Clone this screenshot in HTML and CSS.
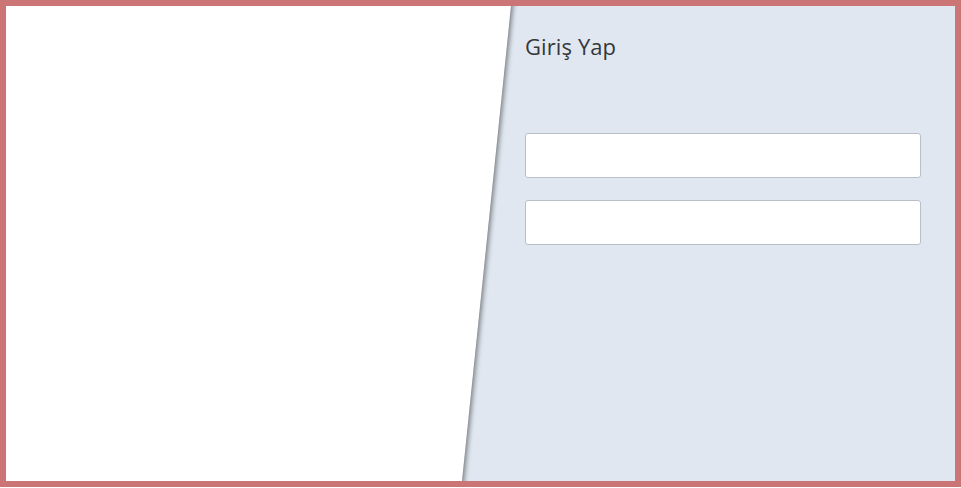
FILE: index.html
```html
<!DOCTYPE html>
<html lang="tr">
<head>
<meta charset="utf-8">
<title>Giriş Yap</title>
<link rel="stylesheet" href="styles.css">
</head>
<body>
<div class="frame">
  <div class="left"></div>
  <div class="panel">
    <h1 class="title">Giriş Yap</h1>
    <form class="form">
      <input class="field" type="text" aria-label="Kullanıcı adı">
      <input class="field" type="password" aria-label="Şifre">
    </form>
  </div>
</div>
</body>
</html>
```

FILE: styles.css
```css
* { box-sizing: border-box; }
html, body { margin: 0; padding: 0; background: #ffffff; }
body { font-family: "Open Sans", "Liberation Sans", sans-serif; }

.frame {
  width: 961px;
  height: 487px;
  border: 6px solid #cb7577;
  display: flex;
  background: #ffffff;
  overflow: hidden;
}

.left {
  flex: 0 0 456px;
  background: #ffffff;
}

.panel {
  flex: 1;
  background:
    linear-gradient(95.89deg,
      #8c9198 48.7px,
      #a9aeb5 50.5px,
      #c8ced6 52.5px,
      #dbe1ea 54.5px,
      rgba(225, 231, 240, 0) 56.5px),
    #e1e7f0;
  clip-path: polygon(49px 0, 100% 0, 100% 100%, 0 100%);
  padding: 25px 35px 0 63px;
}

.title {
  margin: 0;
  font-weight: 400;
  font-size: 22px;
  line-height: 30px;
  letter-spacing: 0.1px;
  color: #34373c;
}

.form {
  margin-top: 72px;
  display: flex;
  flex-direction: column;
  gap: 22px;
}

.field {
  display: block;
  width: 396px;
  height: 45px;
  border: 1px solid #b9bfc9;
  border-radius: 3px;
  background: #ffffff;
  outline: none;
  padding: 0 10px;
  font: inherit;
}
```
